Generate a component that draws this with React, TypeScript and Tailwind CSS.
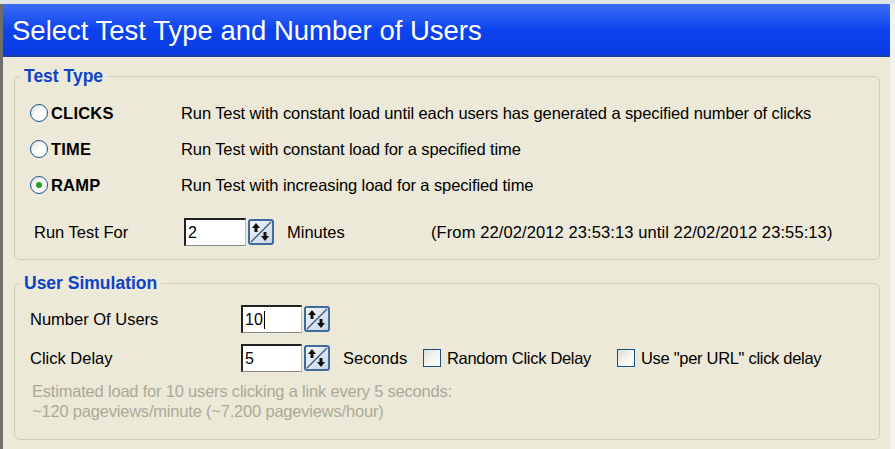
import { useState } from 'react';

const font = { fontFamily: '"Liberation Sans", Arial, sans-serif' };

function SpinButton() {
  return (
    <div className="ml-[2px] h-[26px] w-[26px] rounded-[3px] border-2 border-[#3d6b9c] bg-gradient-to-br from-[#f4f6fa] to-[#c9d6e8]">
      <svg viewBox="0 0 22 22" className="h-full w-full">
        <line x1="21" y1="1" x2="1" y2="21" stroke="#3d5f86" strokeWidth="1.4" />
        <path d="M6 2 L10 7 H7.5 V11 H4.5 V7 H2 Z" fill="#111" />
        <path d="M15 20 L11 15 H13.5 V11 H16.5 V15 H19 Z" fill="#111" />
      </svg>
    </div>
  );
}

function NumberField({ value, width, caret }: { value: string; width: string; caret?: boolean }) {
  return (
    <div className="flex items-center">
      <div
        className={`${width} flex h-[28px] items-center border-t-2 border-l-2 border-b border-r border-t-[#222] border-l-[#222] border-b-[#888] border-r-[#bbb] bg-white pl-[2px] text-[16px] text-black`}
      >
        {value}
        {caret && <span className="ml-[1px] h-[18px] w-px bg-black" />}
      </div>
      <SpinButton />
    </div>
  );
}

function Radio({ checked }: { checked?: boolean }) {
  return (
    <span className="flex h-[18px] w-[18px] items-center justify-center rounded-full border-[1.5px] border-[#1c5180] bg-gradient-to-br from-[#dcdcd4] via-white to-white">
      {checked && <span className="h-[6px] w-[6px] rounded-full bg-[#21a121]" />}
    </span>
  );
}

function Checkbox({ label, width }: { label: string; width?: string }) {
  return (
    <label className={`flex items-center gap-[6px] ${width ?? ''}`}>
      <span className="h-[18px] w-[18px] border-[1.5px] border-[#1c5180] bg-gradient-to-br from-[#dcdcd4] via-[#f4f4f0] to-white" />
      <span className="tracking-[-0.3px]">{label}</span>
    </label>
  );
}

const testTypes = [
  { id: 'CLICKS', text: 'Run Test with constant load until each users has generated a specified number of clicks' },
  { id: 'TIME', text: 'Run Test with constant load for a specified time' },
  { id: 'RAMP', text: 'Run Test with increasing load for a specified time' },
];

export default function App() {
  const [selected] = useState('RAMP');

  return (
    <div style={font} className="flex h-[449px] w-[895px] flex-col overflow-hidden bg-[#f3f3ee] text-[16.5px] text-black">
      <div className="h-[4px] bg-[#dfe3ea]" />
      <div className="flex flex-1 border-l-[3px] border-[#6e6e6a]">
        <div className="flex flex-1 flex-col bg-[#ece9d8]">
          {/* Wizard page header */}
          <div className="flex h-[53px] items-center border-b-2 border-[#1b3fa8] bg-gradient-to-b from-[#3b6cf6] via-[#0d43ee] to-[#0a3ae2] pl-[9px] pt-[3px]">
            <h1 className="text-[27.5px] text-white">Select Test Type and Number of Users</h1>
          </div>

          <div className="flex flex-col pl-[11px] pr-[10px] pt-[6px]">
            <fieldset className="h-[197px] rounded-[6px] border border-[#cfcdbd]">
              <legend className="ml-[5px] px-[4px] text-[17.5px] font-bold text-[#0e43c8]">Test Type</legend>
              <div className="flex flex-col pl-[15px] pt-[6px]">
                {testTypes.map((t) => (
                  <div key={t.id} className="flex h-[36px] items-center">
                    <div className="flex w-[151px] items-center gap-[3px]">
                      <Radio checked={selected === t.id} />
                      <span className="font-bold tracking-[0.2px]">{t.id}</span>
                    </div>
                    <span className="tracking-[-0.1px]">{t.text}</span>
                  </div>
                ))}
                <div className="mt-[14px] flex h-[30px] items-center pl-[4px]">
                  <span className="w-[150px]">Run Test For</span>
                  <NumberField value="2" width="w-[62px]" />
                  <span className="ml-[13px] w-[144px]">Minutes</span>
                  <span className="tracking-[0.1px]">(From 22/02/2012 23:53:13 until 22/02/2012 23:55:13)</span>
                </div>
              </div>
            </fieldset>

            <fieldset className="mt-[10px] h-[170px] rounded-[6px] border border-[#cfcdbd]">
              <legend className="ml-[5px] px-[4px] text-[17.5px] font-bold text-[#0e43c8]">User Simulation</legend>
              <div className="flex flex-col pl-[15px] pt-[8px]">
                <div className="flex h-[30px] items-center">
                  <span className="w-[211px]">Number Of Users</span>
                  <NumberField value="10" width="w-[61px]" caret />
                </div>
                <div className="mt-[9px] flex h-[30px] items-center">
                  <span className="w-[211px]">Click Delay</span>
                  <NumberField value="5" width="w-[61px]" />
                  <span className="ml-[13px] w-[80px]">Seconds</span>
                  <Checkbox label="Random Click Delay" width="w-[194px]" />
                  <Checkbox label={'Use "per URL" click delay'} />
                </div>
                <div className="mt-[8px] pl-[2px] leading-[20px] tracking-[-0.2px] text-[#aba996]">
                  <p>Estimated load for 10 users clicking a link every 5 seconds:</p>
                  <p>~120 pageviews/minute (~7.200 pageviews/hour)</p>
                </div>
              </div>
            </fieldset>
          </div>
        </div>
        <div className="w-[5px] bg-[#f3f3ee]" />
      </div>
    </div>
  );
}
